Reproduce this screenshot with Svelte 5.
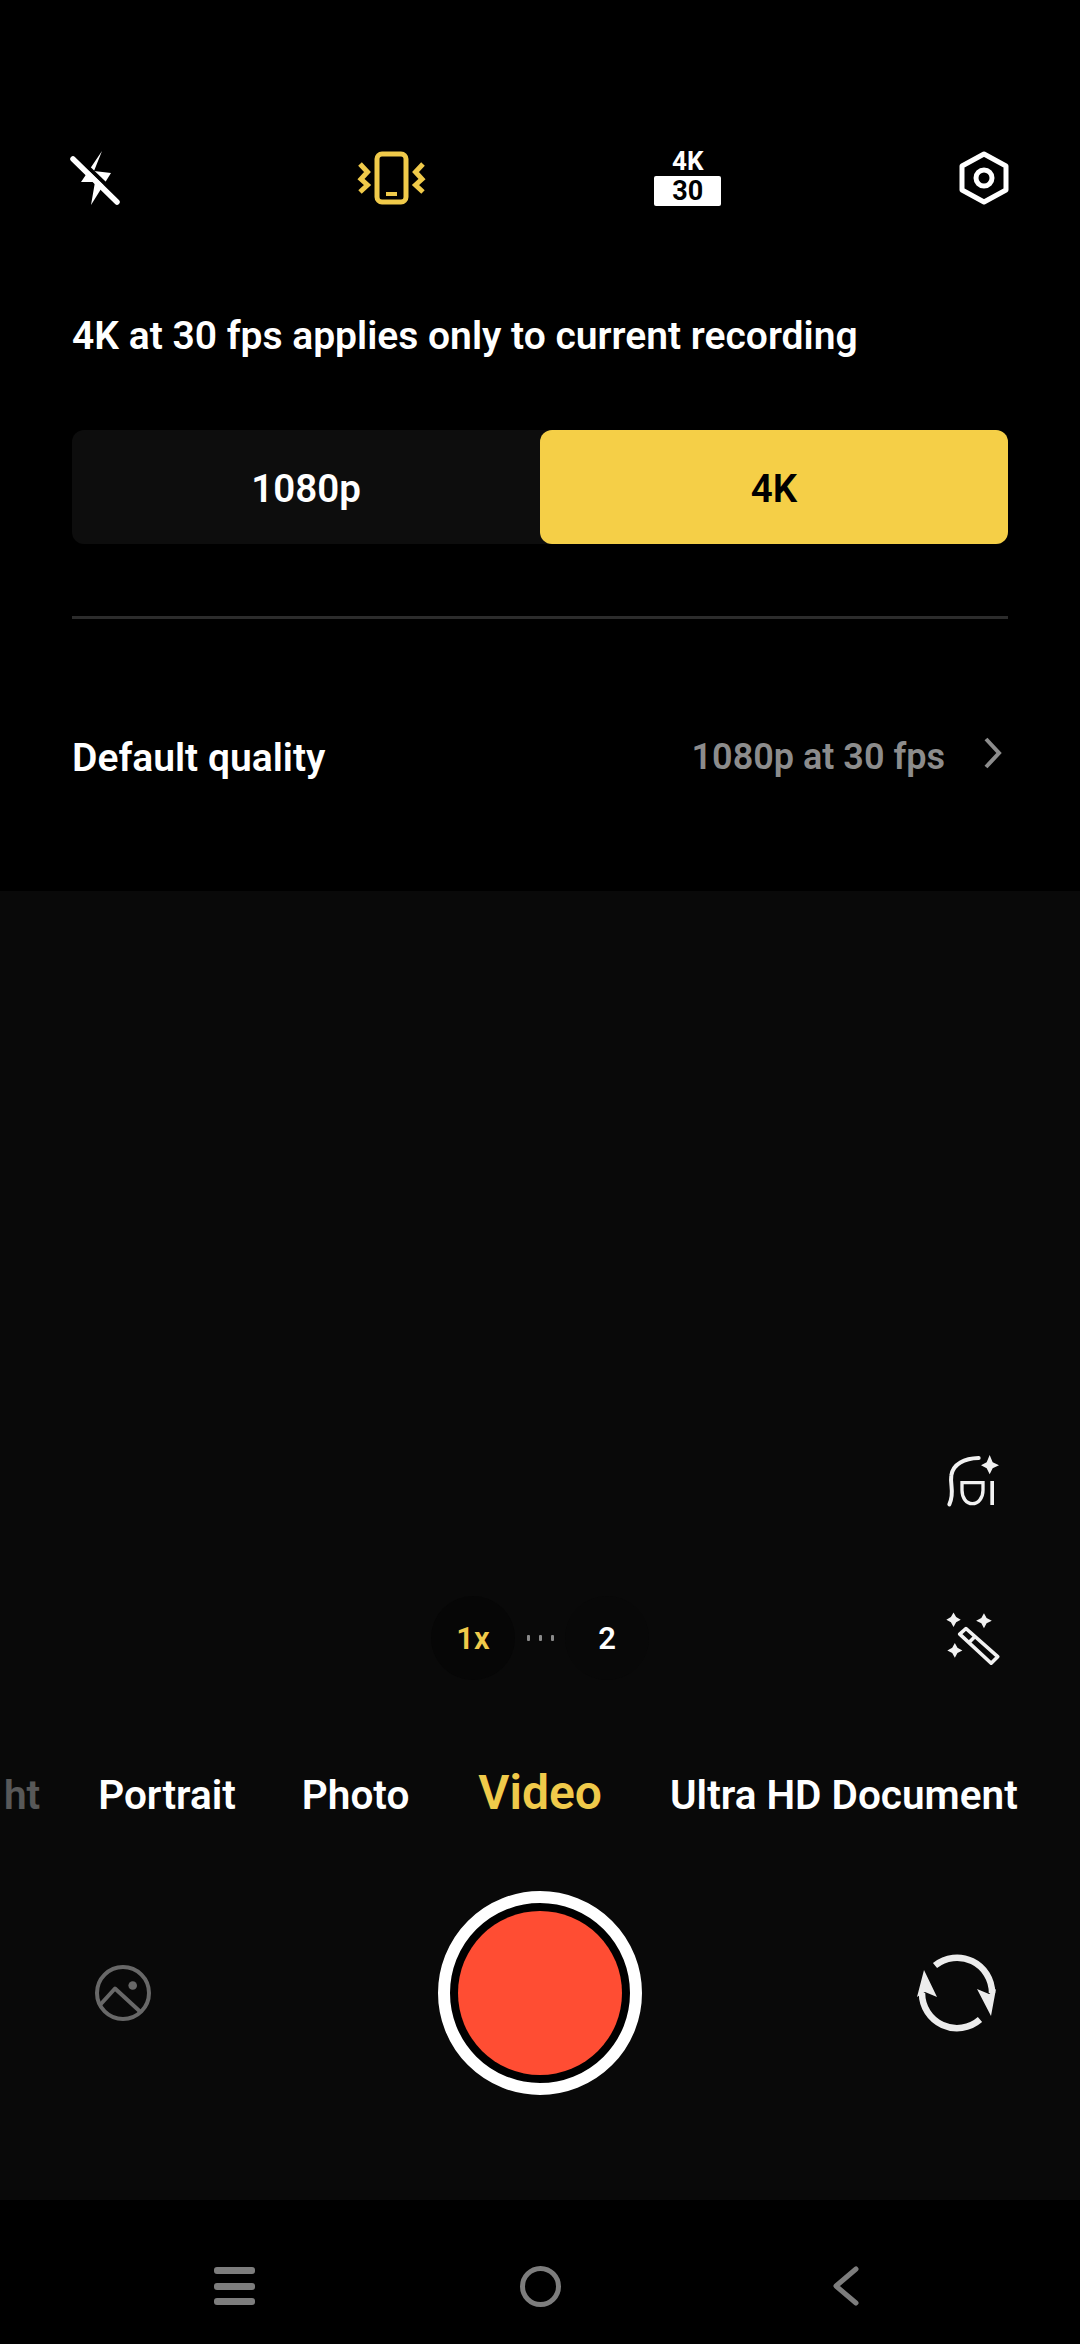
<script>
  const modes = [
    { label: 'ht', cls: 'night' },
    { label: 'Portrait', cls: '' },
    { label: 'Photo', cls: '' },
    { label: 'Video', cls: 'active' },
    { label: 'Ultra HD Document', cls: '' }
  ];
</script>

<div class="screen">
  <section class="panel">
    <div class="icons">
      <div class="ico">
        <svg width="54" height="58" viewBox="68 149 54 58">
          <polygon points="102,151 94,171 111,173 91,205 95,182 81,182" fill="#fff" />
          <line x1="75" y1="155" x2="122" y2="200" stroke="#000" stroke-width="4" />
          <line x1="73" y1="159" x2="117" y2="202" stroke="#fff" stroke-width="5.5" stroke-linecap="round" />
        </svg>
      </div>
      <div class="ico">
        <svg width="70" height="56" viewBox="357 150 70 56" fill="none" stroke="#f0ca4a">
          <rect x="378" y="154" width="29" height="48" rx="5" stroke-width="5" />
          <rect x="387" y="192" width="11" height="4" fill="#f0ca4a" stroke="none" />
          <polyline points="361,164 368.5,172 362,179 368.5,185 361,192" stroke-width="5" />
          <polyline points="424,164 416.5,172 423,179 416.5,185 424,192" stroke-width="5" />
        </svg>
      </div>
      <div class="ico res">
        <span class="res-top">4K</span>
        <span class="res-box">30</span>
      </div>
      <div class="ico">
        <svg width="52" height="56" viewBox="958 150 52 56" fill="none" stroke="#fff">
          <polygon points="984,154 1006,166 1006,190 984,202 962,190 962,166" stroke-width="5" stroke-linejoin="round" />
          <circle cx="984" cy="178" r="8" stroke-width="5" />
        </svg>
      </div>
    </div>

    <p class="notice">4K at 30 fps applies only to current recording</p>

    <div class="segment">
      <div class="seg">1080p</div>
      <div class="seg on">4K</div>
    </div>

    <div class="rule"></div>

    <div class="quality">
      <span class="q-label">Default quality</span>
      <span class="q-value">1080p at 30 fps</span>
      <svg class="chev" width="20" height="32" viewBox="0 0 20 32" fill="none" stroke="#8c8c8c" stroke-width="4">
        <polyline points="3,2 16,16 3,30" />
      </svg>
    </div>
  </section>

  <section class="preview">
    <div class="tool-row">
      <svg width="54" height="55" viewBox="140 95 160 165" fill="none" stroke="#f2f2f2" stroke-width="12">
        <path d="M149 252 C166 215 150 195 155 165 C160 130 195 114 237 113" stroke-linecap="round" />
        <path d="M187 187 H250 V210 C250 233 236 250 218 250 C200 250 187 233 187 210 Z" stroke-width="10" />
        <rect x="272" y="182" width="11" height="72" fill="#f2f2f2" stroke="none" />
        <path d="M270 104 L279 126 L298 135 L279 144 L270 162 L261 144 L244 135 L261 126 Z" fill="#f2f2f2" stroke="none" />
      </svg>
    </div>

    <div class="zoom-row">
      <div></div>
      <div class="zoom">
        <span class="z-btn z-active">1x</span>
        <span class="dots"><i></i><i></i><i></i></span>
        <span class="z-btn z-idle">2</span>
      </div>
      <div class="wand">
        <svg width="54" height="55" viewBox="130 568 165 165" fill="none" stroke="#f2f2f2" stroke-width="11">
          <path d="M153 571 L161 585 L175 593 L161 601 L153 615 L145 601 L131 593 L145 585 Z" fill="#f2f2f2" stroke="none" />
          <path d="M246 573 L254 588 L270 596 L254 604 L246 619 L238 604 L222 596 L238 588 Z" fill="#f2f2f2" stroke="none" />
          <path d="M157 664 L165 679 L180 687 L165 695 L157 709 L149 695 L134 687 L149 679 Z" fill="#f2f2f2" stroke="none" />
          <path d="M191 620 L288 706 L268 726 L172 637 Z" stroke-linejoin="round" />
          <line x1="221" y1="642" x2="201" y2="662" />
        </svg>
      </div>
    </div>

    <div class="modes">
      {#each modes as m}
        <span class="mode {m.cls}">{m.label}</span>
      {/each}
    </div>

    <div class="shutter-row">
      <div class="side left">
        <svg width="60" height="60" viewBox="93 1963 60 60" fill="none" stroke="#686868" stroke-width="4">
          <circle cx="123" cy="1993" r="26" />
          <path d="M100 2005 L115 1988.5 L140 2011.5" stroke-linejoin="round" />
          <circle cx="132.7" cy="1985.5" r="4.3" fill="#686868" stroke="none" />
        </svg>
      </div>
      <div class="shutter"><div class="red"></div></div>
      <div class="side right">
        <svg width="84" height="84" viewBox="915 1951 84 84" fill="none" stroke="#ececec" stroke-width="6.5">
          <path d="M935 1965.5 A35 35 0 0 1 992 1993" />
          <path d="M980 2019.5 A35 35 0 0 1 922 1993" />
          <polygon points="924,1970 937,1997 925,1992 917,1997" fill="#ececec" stroke="none" />
          <polygon points="991,2016 977,1989 989,1994 996,1989" fill="#ececec" stroke="none" />
        </svg>
      </div>
    </div>
  </section>

  <nav class="nav">
    <div class="burger"><i></i><i></i><i></i></div>
    <div class="home"></div>
    <svg class="back" width="28" height="42" viewBox="0 0 28 42" fill="none" stroke="#7d7d7d" stroke-width="5" stroke-linecap="round" stroke-linejoin="round">
      <polyline points="24,4 4,21 24,38" />
    </svg>
  </nav>
</div>

<style>
  :global(body) { background: #000; }
  .screen {
    width: 1080px;
    height: 2344px;
    display: flex;
    flex-direction: column;
    background: #000;
    color: #fff;
    font-family: Roboto, "Liberation Sans", sans-serif;
    font-weight: 600;
    overflow: hidden;
  }
  .panel {
    height: 891px;
    padding: 149px 72px 0;
    box-sizing: border-box;
    flex: none;
  }
  .icons {
    display: grid;
    grid-template-columns: repeat(4, 296.3px);
    margin-left: -125px;
    height: 58px;
  }
  .ico { display: flex; justify-content: center; align-items: center; }
  .res { flex-direction: column; justify-content: flex-start; }
  .res-top { font-size: 26px; font-weight: 700; line-height: 24px; }
  .res-box {
    width: 67px;
    height: 30px;
    margin-top: 3px;
    background: #fff;
    color: #000;
    font-size: 27px;
    font-weight: 700;
    line-height: 30px;
    text-align: center;
    border-radius: 2px;
  }
  .notice {
    margin: 101px 0 0;
    font-size: 39px;
    line-height: 56px;
    white-space: nowrap;
  }
  .segment {
    display: grid;
    grid-template-columns: 1fr 1fr;
    height: 114px;
    margin-top: 66px;
    background: #0d0d0d;
    border-radius: 12px;
  }
  .seg {
    display: flex;
    align-items: center;
    justify-content: center;
    font-size: 38.5px;
    padding-top: 2px;
  }
  .seg.on { background: #f5cf47; color: #000; border-radius: 12px; }
  .rule { height: 3px; margin-top: 72px; background: #2c2c2c; }
  .quality {
    display: flex;
    align-items: center;
    height: 56px;
    margin-top: 111px;
  }
  .q-label { font-size: 39px; flex: 1; }
  .q-value { font-size: 36px; color: #8c8c8c; margin-top: -2px; }
  .chev { margin-left: 38px; margin-right: 5px; margin-top: -10px; }

  .preview {
    height: 1309px;
    flex: none;
    background: #090909;
    padding-top: 561px;
    box-sizing: border-box;
  }
  .tool-row { display: flex; justify-content: flex-end; padding-right: 80px; height: 55px; }
  .zoom-row {
    display: grid;
    grid-template-columns: 1fr auto 1fr;
    grid-template-rows: 56px;
    align-items: center;
    margin-top: 103px;
    height: 56px;
  }
  .wand { display: flex; justify-content: flex-end; padding-right: 80px; }
  .zoom { display: flex; align-items: center; width: 218px; justify-content: space-between; height: 84px; }
  .z-btn {
    width: 84px;
    height: 84px;
    border-radius: 50%;
    background: #060606;
    display: flex;
    align-items: center;
    justify-content: center;
    font-size: 31px;
  }
  .z-idle { background: #080808; }
  .z-active { color: #f0ca4a; }
  .dots { display: flex; gap: 9px; }
  .dots i { width: 3px; height: 6px; background: #8a8a8a; border-radius: 1px; }
  .modes {
    display: flex;
    align-items: baseline;
    gap: 66px;
    margin-top: 98px;
    padding-left: 4px;
    height: 60px;
    white-space: nowrap;
  }
  .mode { font-size: 40.5px; }
  .mode.night { opacity: 0.32; margin-right: -8px; }
  .mode.active { font-size: 48px; color: #f0ca4a; margin-left: 3px; margin-right: 2px; }
  .shutter-row {
    display: grid;
    grid-template-columns: 1fr 204px 1fr;
    align-items: center;
    margin-top: 67px;
    height: 204px;
  }
  .side { display: flex; }
  .left { padding-left: 93px; }
  .right { justify-content: flex-end; padding-right: 81px; }
  .shutter {
    width: 204px;
    height: 204px;
    box-sizing: border-box;
    border: 12px solid #fff;
    border-radius: 50%;
    background: #000;
    display: flex;
    align-items: center;
    justify-content: center;
  }
  .red { width: 164px; height: 164px; border-radius: 50%; background: #ff4d33; }

  .nav {
    height: 144px;
    flex: none;
    box-sizing: border-box;
    padding-top: 28px;
    background: #000;
    display: grid;
    grid-template-columns: 1fr 41px 1fr;
    align-items: center;
  }
  .burger {
    width: 41px;
    display: flex;
    flex-direction: column;
    gap: 8.5px;
    margin-left: 214px;
  }
  .burger i { height: 7px; background: #7d7d7d; border-radius: 3px; }
  .home {
    width: 41px;
    height: 41px;
    box-sizing: border-box;
    border: 5px solid #7d7d7d;
    border-radius: 50%;
  }
  .back { justify-self: end; margin-right: 220px; }
</style>
